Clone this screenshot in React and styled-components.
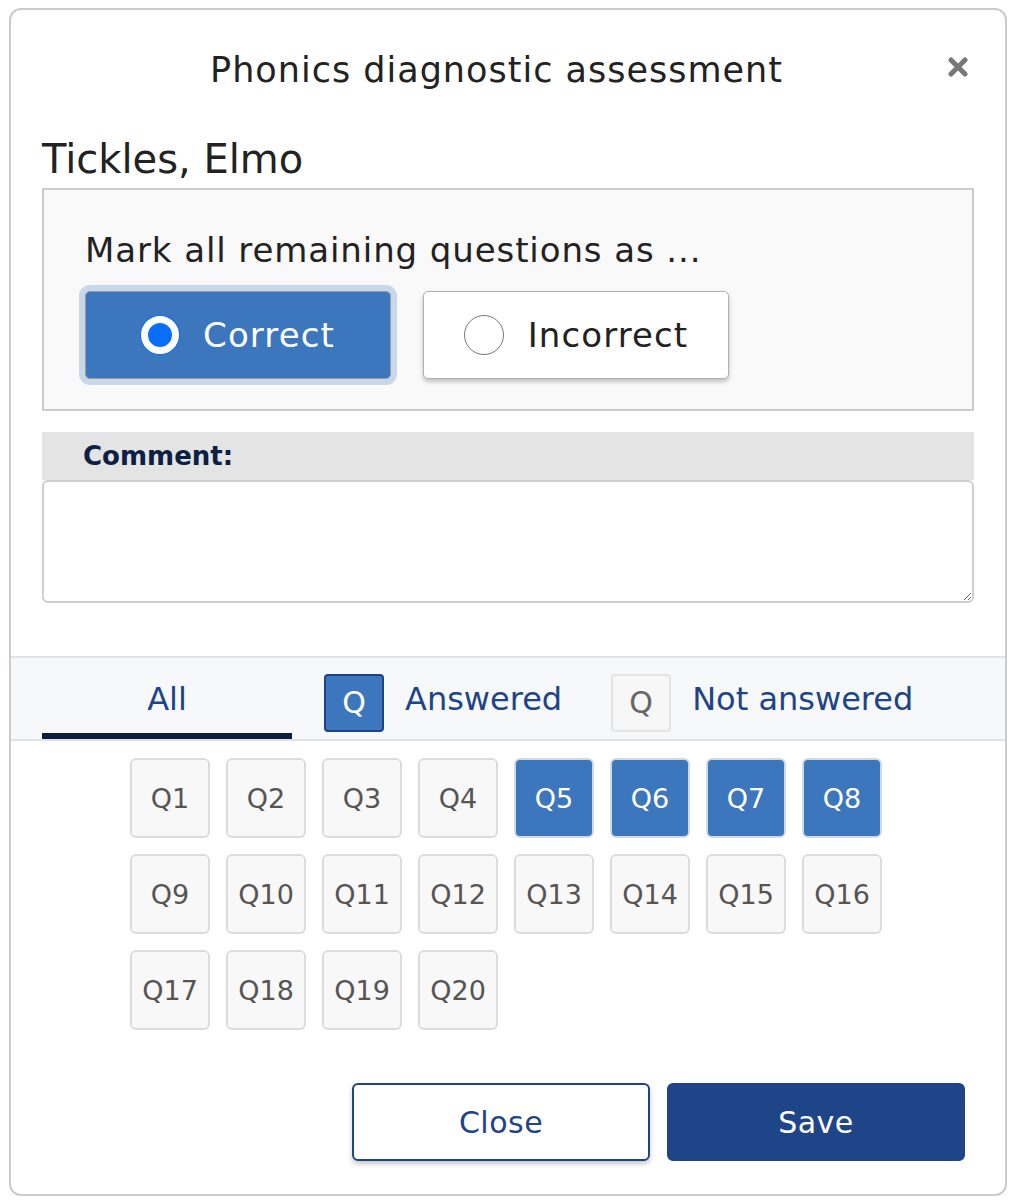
import React, { useState } from 'react';
import styled, { createGlobalStyle } from 'styled-components';

const GlobalStyle = createGlobalStyle`
  * { box-sizing: border-box; }
  body {
    margin: 0;
    background: #fff;
    font-family: "DejaVu Sans", "Open Sans", sans-serif;
    color: #222;
  }
`;

const Page = styled.div`
  padding: 8px 6px 5px 9px;
  background: #fff;
`;

const Modal = styled.div`
  width: 998px;
  height: 1188px;
  border: 2px solid #cbcbcb;
  border-radius: 12px;
  background: #fff;
  display: flex;
  flex-direction: column;
`;

const Header = styled.div`
  display: grid;
  grid-template-columns: 1fr auto 1fr;
  align-items: center;
  padding-top: 40px;
`;

const Title = styled.h1`
  grid-column: 2;
  margin: 0 23px 0 0;
  font-size: 35px;
  line-height: 40px;
  letter-spacing: 1px;
  font-weight: 400;
  color: #222;
`;

const CloseX = styled.button`
  grid-column: 3;
  justify-self: end;
  margin: -6px 36px 0 0;
  padding: 0;
  width: 22px;
  height: 22px;
  border: 0;
  background: none;
  display: flex;
  align-items: center;
  justify-content: center;
  cursor: pointer;
`;

const Body = styled.div`
  padding: 0 31px;
`;

const StudentName = styled.h2`
  margin: 45px 0 5px;
  font-size: 40px;
  line-height: 48px;
  font-weight: 400;
  color: #222;
`;

const MarkPanel = styled.div`
  background: #f9f9f9;
  border: 2px solid #cccccc;
  padding: 40px 41px 30px;
`;

const MarkLabel = styled.div`
  font-size: 34px;
  line-height: 40px;
  letter-spacing: 0.9px;
  color: #222;
`;

const Choices = styled.div`
  display: flex;
  gap: 32px;
  margin-top: 21px;
`;

const Choice = styled.button`
  width: 306px;
  height: 88px;
  display: flex;
  align-items: center;
  justify-content: center;
  gap: 24px;
  border-radius: 5px;
  font-family: inherit;
  font-size: 34px;
  letter-spacing: 1.1px;
  cursor: pointer;
  background: ${({ $active }) => ($active ? '#3c76bc' : '#fff')};
  color: ${({ $active }) => ($active ? '#fff' : '#222')};
  border: 1.5px solid ${({ $active }) => ($active ? '#9a9a9a' : '#b0b0b0')};
  box-shadow: ${({ $active }) =>
    $active ? '0 0 0 6px #c8d8e9' : '0 3px 4px rgba(0, 0, 0, 0.22)'};
`;

const Radio = styled.span`
  width: ${({ $checked }) => ($checked ? 38 : 40)}px;
  height: ${({ $checked }) => ($checked ? 38 : 40)}px;
  border-radius: 50%;
  flex: none;
  background: ${({ $checked }) => ($checked ? '#0a6efd' : '#fff')};
  border: ${({ $checked }) => ($checked ? '7px solid #fff' : '1.5px solid #777')};
  box-shadow: ${({ $checked }) => ($checked ? '0 0 0 1px #0a6efd' : 'none')};
`;

const CommentHead = styled.div`
  margin-top: 21px;
  height: 48px;
  background: #e4e4e4;
  padding-left: 41px;
  display: flex;
  align-items: center;
  font-size: 26px;
  font-weight: 700;
  color: #0c2044;
`;

const CommentBox = styled.textarea`
  display: block;
  width: 100%;
  height: 123px;
  border: 2px solid #cfcfcf;
  border-radius: 6px;
  font-family: inherit;
  font-size: 26px;
  resize: vertical;
  outline: none;
`;

const TabBar = styled.div`
  margin-top: 53px;
  height: 85px;
  background: #f6f8fa;
  border-top: 2px solid #dfe3e8;
  border-bottom: 2px solid #dfe3e8;
  padding-left: 31px;
  display: flex;
`;

const Tab = styled.div`
  display: flex;
  align-items: center;
  justify-content: center;
  gap: 21px;
  height: 81px;
  width: ${({ $width }) => ($width ? `${$width}px` : 'auto')};
  margin-left: ${({ $offset }) => $offset || 0}px;
  font-size: 32px;
  color: #1e4488;
  border-bottom: 6px solid ${({ $active }) => ($active ? '#0b1f44' : 'transparent')};
  padding-top: 6px;
  cursor: pointer;
`;

const LegendBox = styled.span`
  width: 60px;
  height: 58px;
  margin-top: 8px;
  border-radius: 4px;
  display: flex;
  align-items: center;
  justify-content: center;
  font-size: 30px;
  background: ${({ $filled }) => ($filled ? '#3c76bc' : '#f7f7f7')};
  color: ${({ $filled }) => ($filled ? '#fff' : '#666')};
  border: 2px solid ${({ $filled }) => ($filled ? '#1e4488' : '#e4e4e4')};
`;

const QuestionGrid = styled.div`
  margin-top: 17px;
  padding-right: 4px;
  display: grid;
  grid-template-columns: repeat(8, 80px);
  grid-auto-rows: 80px;
  gap: 16px;
  justify-content: center;
`;

const QuestionCell = styled.button`
  border-radius: 6px;
  font-family: inherit;
  font-size: 27px;
  cursor: pointer;
  padding: 0;
  background: ${({ $answered }) => ($answered ? '#3c76bc' : '#f8f8f8')};
  color: ${({ $answered }) => ($answered ? '#fff' : '#555')};
  border: 2px solid ${({ $answered }) => ($answered ? '#d3d9e0' : '#dcdcdc')};
`;

const Footer = styled.div`
  margin-top: 53px;
  padding-right: 40px;
  display: flex;
  justify-content: flex-end;
  gap: 17px;
`;

const FooterButton = styled.button`
  width: 298px;
  height: 78px;
  border-radius: 6px;
  font-family: inherit;
  font-size: 30px;
  letter-spacing: 0.5px;
  cursor: pointer;
  border: 2px solid #1e4488;
  background: ${({ $primary }) => ($primary ? '#1f4589' : '#fff')};
  color: ${({ $primary }) => ($primary ? '#fff' : '#1e4488')};
  box-shadow: ${({ $primary }) => ($primary ? 'none' : '0 3px 5px rgba(0, 0, 0, 0.22)')};
`;

const answered = [5, 6, 7, 8];
const questions = Array.from({ length: 20 }, (_, i) => i + 1);

export default function App() {
  const [mark, setMark] = useState('correct');

  return (
    <Page>
      <GlobalStyle />
      <Modal>
        <Header>
          <Title>Phonics diagnostic assessment</Title>
          <CloseX aria-label="Close">
            <svg width="20" height="20" viewBox="0 0 20 20">
              <path d="M3 3 L17 17 M17 3 L3 17" stroke="#777" strokeWidth="5" strokeLinecap="round" />
            </svg>
          </CloseX>
        </Header>

        <Body>
          <StudentName>Tickles, Elmo</StudentName>
          <MarkPanel>
            <MarkLabel>Mark all remaining questions as ...</MarkLabel>
            <Choices>
              <Choice $active={mark === 'correct'} onClick={() => setMark('correct')}>
                <Radio $checked={mark === 'correct'} />
                Correct
              </Choice>
              <Choice $active={mark === 'incorrect'} onClick={() => setMark('incorrect')}>
                <Radio $checked={mark === 'incorrect'} />
                Incorrect
              </Choice>
            </Choices>
          </MarkPanel>

          <CommentHead>Comment:</CommentHead>
          <CommentBox />
        </Body>

        <TabBar>
          <Tab $active $width={250}>All</Tab>
          <Tab $offset={32}>
            <LegendBox $filled>Q</LegendBox>
            Answered
          </Tab>
          <Tab $offset={49}>
            <LegendBox>Q</LegendBox>
            Not answered
          </Tab>
        </TabBar>

        <QuestionGrid>
          {questions.map((q) => (
            <QuestionCell key={q} $answered={answered.includes(q)}>
              Q{q}
            </QuestionCell>
          ))}
        </QuestionGrid>

        <Footer>
          <FooterButton>Close</FooterButton>
          <FooterButton $primary>Save</FooterButton>
        </Footer>
      </Modal>
    </Page>
  );
}
